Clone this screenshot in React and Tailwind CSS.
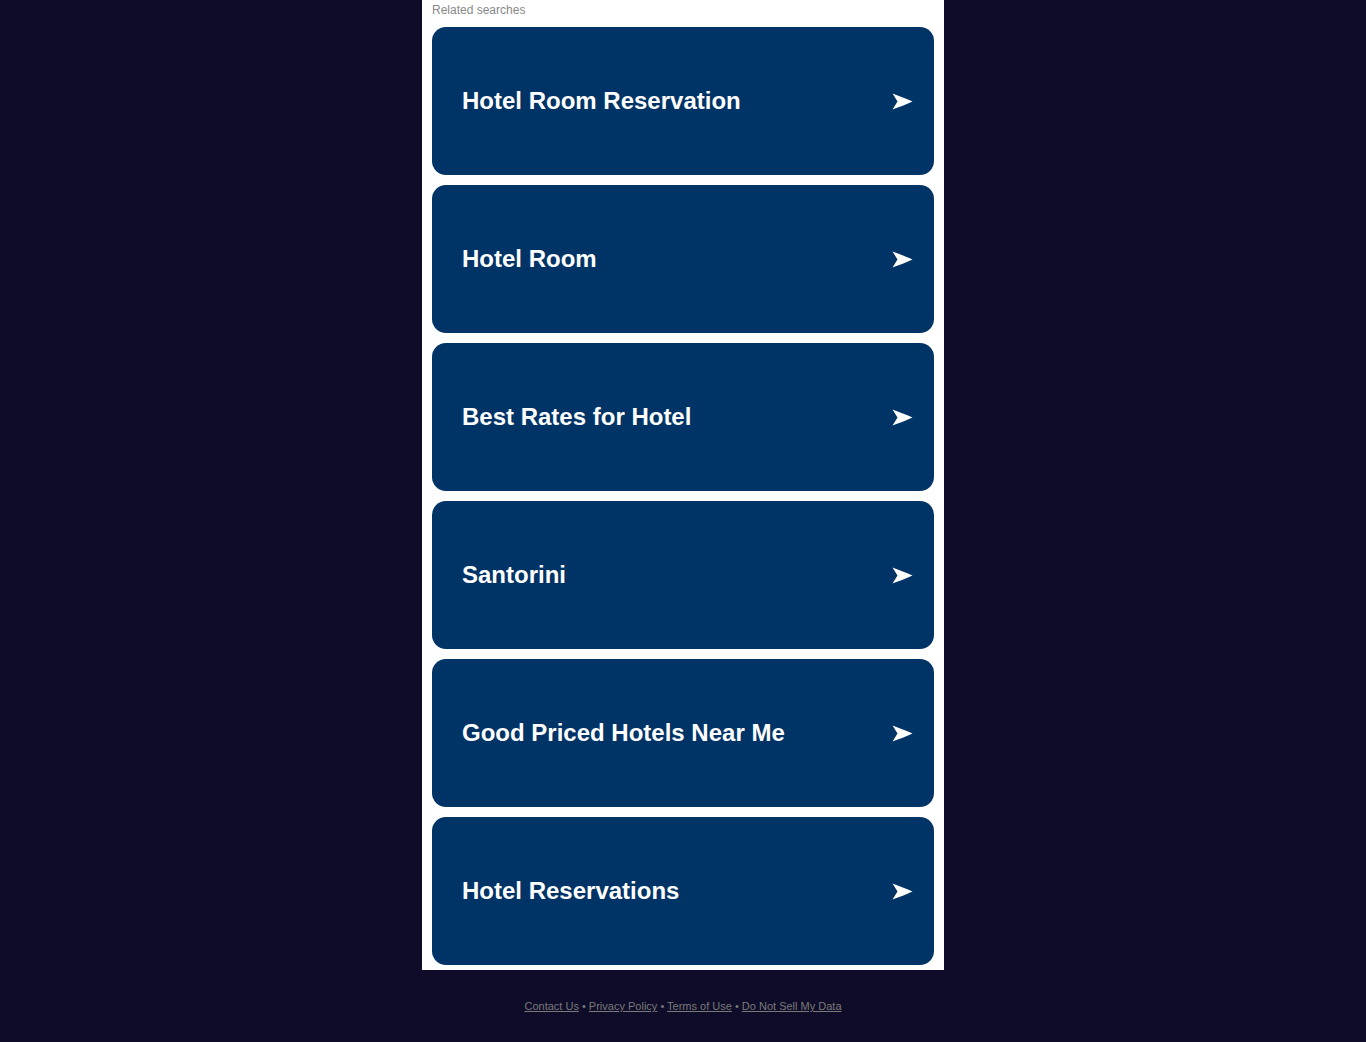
import React from 'react';

const searches = [
  'Hotel Room Reservation',
  'Hotel Room',
  'Best Rates for Hotel',
  'Santorini',
  'Good Priced Hotels Near Me',
  'Hotel Reservations',
];

function Arrow() {
  return (
    <svg width="21" height="17" viewBox="0 0 21 17" className="flex-none" aria-hidden="true">
      <path d="M0.5 0.5 C6 2.5 14 5.5 20.5 8.5 C14 11.5 6 14.5 0.5 16.5 L5.5 8.5 Z" fill="#ffffff" />
    </svg>
  );
}

export default function App() {
  return (
    <div className="min-h-[1042px] bg-[#0e0c28] font-['Liberation_Sans',Arial,sans-serif]">
      <div className="mx-auto w-[522px] bg-white px-[10px] pb-[5px]">
        <div className="pt-[3px] pb-[10px] text-[12px] leading-[14px] text-[#888888]">Related searches</div>
        <div className="flex flex-col gap-[10px]">
          {searches.map((s) => (
            <a
              key={s}
              href="#"
              className="flex h-[148px] items-center justify-between rounded-[14px] bg-[#003366] pl-[30px] pr-[21px] text-[24px] font-bold text-white"
            >
              <span>{s}</span>
              <Arrow />
            </a>
          ))}
        </div>
      </div>
      <div className="pt-[30px] text-center text-[11px] leading-[13px] text-[#7a7a7a]">
        <a href="#" className="underline">Contact Us</a>
        <span> • </span>
        <a href="#" className="underline">Privacy Policy</a>
        <span> • </span>
        <a href="#" className="underline">Terms of Use</a>
        <span> • </span>
        <a href="#" className="underline">Do Not Sell My Data</a>
      </div>
    </div>
  );
}
